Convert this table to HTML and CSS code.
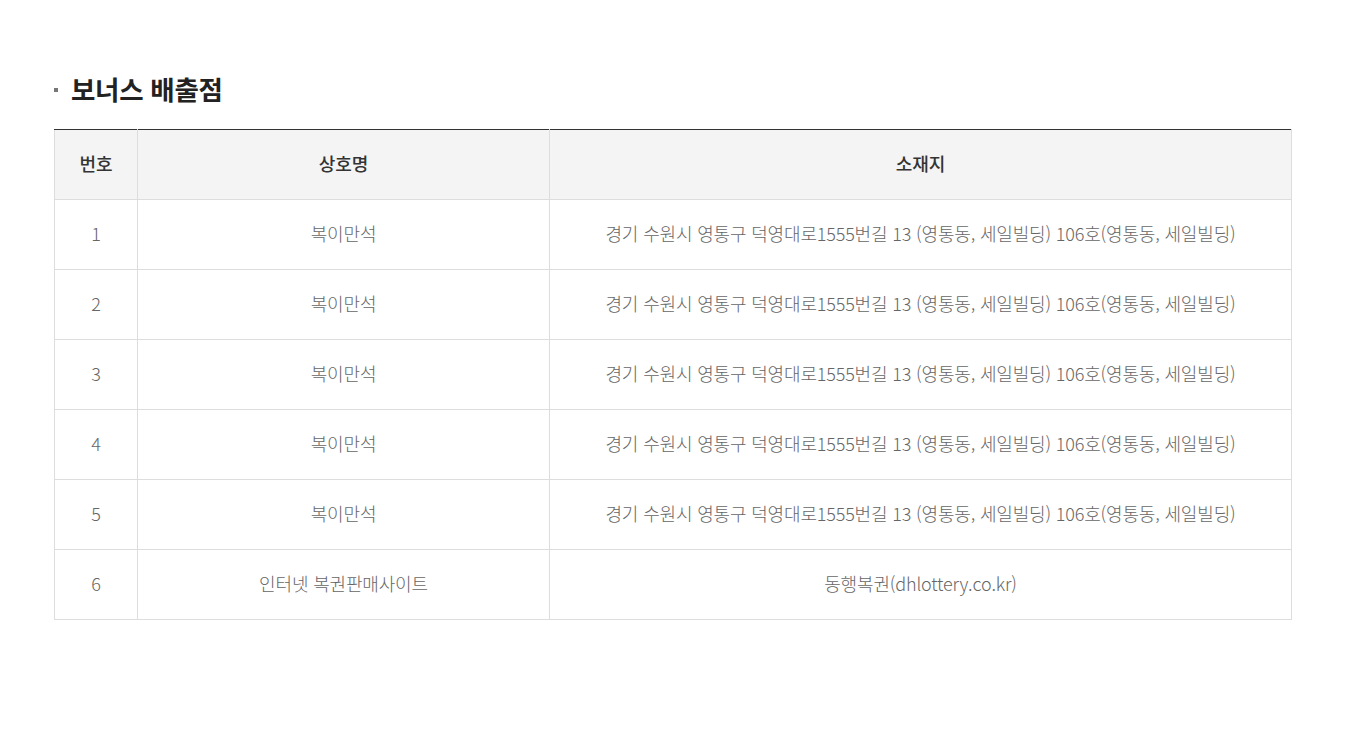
FILE: index.html
```html
<!DOCTYPE html>
<html lang="ko">
<head>
<meta charset="utf-8">
<link rel="stylesheet" href="styles.css">
</head>
<body>
<div class="wrap">
  <h2 class="title"><span class="bullet"></span>보너스 배출점</h2>
  <table class="tbl">
    <colgroup>
      <col class="c1"><col class="c2"><col class="c3">
    </colgroup>
    <thead>
      <tr><th>번호</th><th>상호명</th><th>소재지</th></tr>
    </thead>
    <tbody>
      <tr><td>1</td><td>복이만석</td><td>경기 수원시 영통구 덕영대로1555번길 13 (영통동, 세일빌딩) 106호(영통동, 세일빌딩)</td></tr>
      <tr><td>2</td><td>복이만석</td><td>경기 수원시 영통구 덕영대로1555번길 13 (영통동, 세일빌딩) 106호(영통동, 세일빌딩)</td></tr>
      <tr><td>3</td><td>복이만석</td><td>경기 수원시 영통구 덕영대로1555번길 13 (영통동, 세일빌딩) 106호(영통동, 세일빌딩)</td></tr>
      <tr><td>4</td><td>복이만석</td><td>경기 수원시 영통구 덕영대로1555번길 13 (영통동, 세일빌딩) 106호(영통동, 세일빌딩)</td></tr>
      <tr><td>5</td><td>복이만석</td><td>경기 수원시 영통구 덕영대로1555번길 13 (영통동, 세일빌딩) 106호(영통동, 세일빌딩)</td></tr>
      <tr><td>6</td><td>인터넷 복권판매사이트</td><td>동행복권(dhlottery.co.kr)</td></tr>
    </tbody>
  </table>
</div>
</body>
</html>
```
FILE: styles.css
```css
html, body { margin: 0; padding: 0; background: #fff; }
body { font-family: "Noto Sans CJK KR", "Noto Sans", sans-serif; color: #666; }
.wrap { padding: 71px 58px 0 54px; }
.title {
  margin: 0 0 22px 0;
  display: flex;
  align-items: center;
  font-size: 26.5px;
  font-weight: 700;
  color: #222;
  letter-spacing: -0.3px;
  line-height: 36px;
}
.bullet {
  display: inline-block;
  width: 4px; height: 4px;
  background: #777;
  margin-right: 13px;
  margin-top: 1px;
}
.tbl {
  width: 1238px;
  border-collapse: collapse;
  table-layout: fixed;
}
.c1 { width: 83px; }
.c2 { width: 412px; }
.c3 { width: auto; }
.tbl th, .tbl td {
  height: 70px;
  box-sizing: border-box;
  border: 1px solid #ddd;
  text-align: center;
  font-size: 18px;
  letter-spacing: -0.17px;
  padding: 0 0 4px 0;
}
.tbl thead th { border-top: 1px solid #333; }
.tbl th {
  background: #f4f4f4;
  color: #333;
  font-weight: 500;
  letter-spacing: 0;
}
.tbl td {
  color: #666;
  font-weight: 300;
}
```
